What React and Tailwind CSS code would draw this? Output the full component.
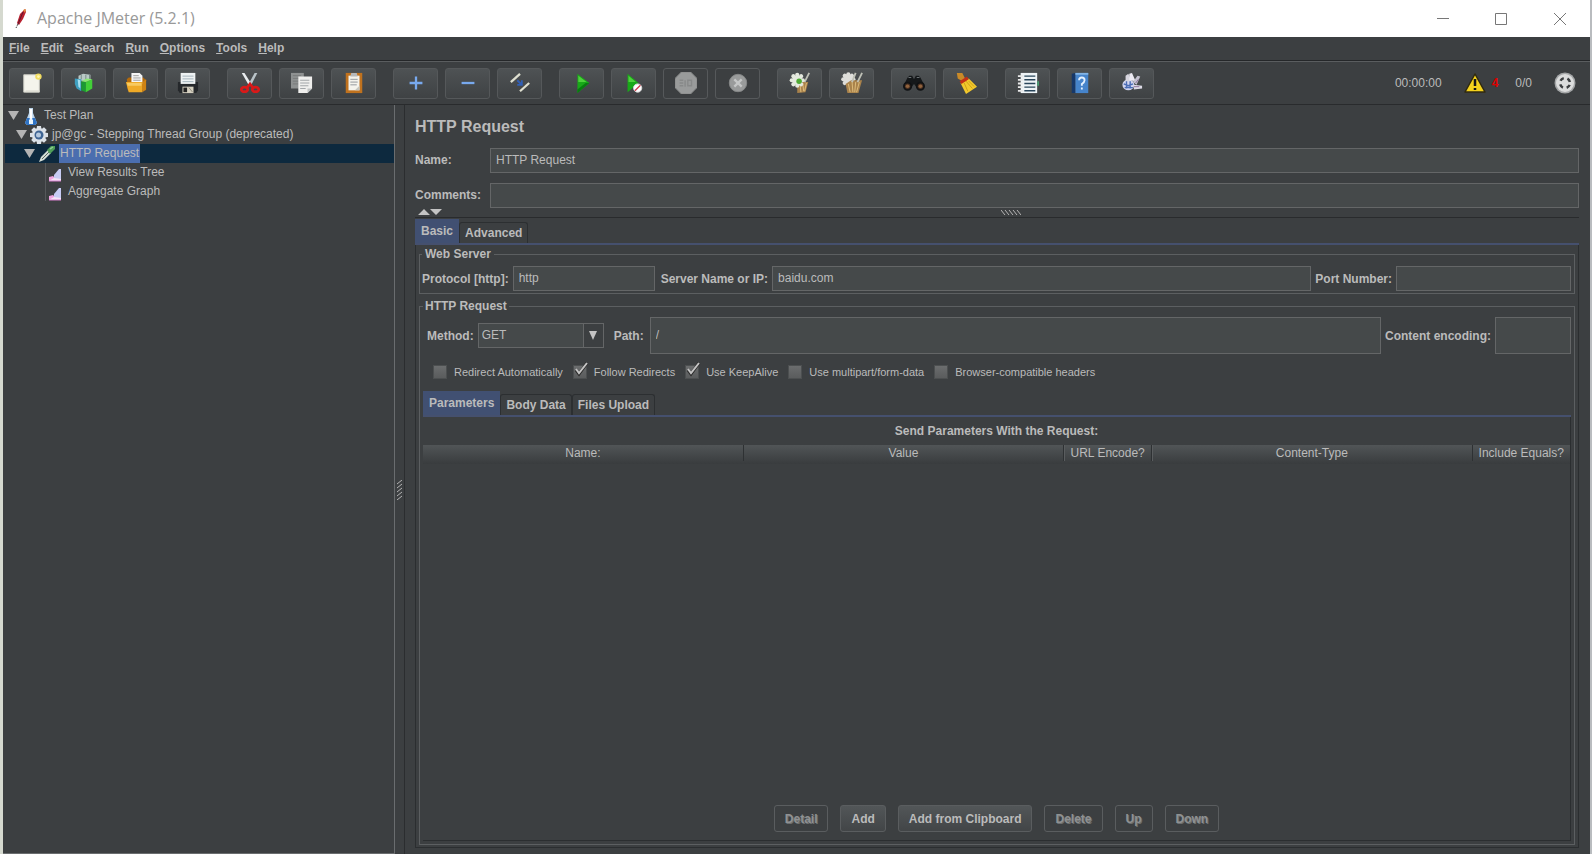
import { useState } from "react";

const menus = ["File", "Edit", "Search", "Run", "Options", "Tools", "Help"];

const toolGroups = [
  ["New", "Templates", "Open", "Save"],
  ["Cut", "Copy", "Paste"],
  ["Expand All", "Collapse All", "Toggle"],
  ["Start", "Start no pauses", "Stop", "Shutdown"],
  ["Clear", "Clear All"],
  ["Search Tree", "Reset Search"],
  ["Function Helper", "Help Contents", "Undo"],
];

const disabledTools = ["Stop", "Shutdown"];

const treeNodes = [
  { label: "Test Plan", icon: "flask", pad: "pl-[3px]", open: true },
  { label: "jp@gc - Stepping Thread Group (deprecated)", icon: "gear", pad: "pl-[11px]", open: true },
  { label: "HTTP Request", icon: "dropper", pad: "pl-[19px]", open: true },
  { label: "View Results Tree", icon: "graph", pad: "pl-10" },
  { label: "Aggregate Graph", icon: "graph", pad: "pl-10" },
];

const initialOptions = [
  { id: "redirect", label: "Redirect Automatically", checked: false },
  { id: "follow", label: "Follow Redirects", checked: true },
  { id: "keepalive", label: "Use KeepAlive", checked: true },
  { id: "multipart", label: "Use multipart/form-data", checked: false },
  { id: "browser", label: "Browser-compatible headers", checked: false },
];

const actions = [
  { label: "Detail", disabled: true },
  { label: "Add" },
  { label: "Add from Clipboard" },
  { label: "Delete", disabled: true },
  { label: "Up", disabled: true },
  { label: "Down", disabled: true },
];

const gearPoints = [0, 45, 90, 135, 180, 225, 270, 315];

const toolIcons = {
  New: (
    <>
      <path d="M3 3h17v19H3z" fill="#f4f4ec" stroke="#cfcfc6" />
      <path d="M5 20h15v2H5z" fill="#deded4" />
      <circle cx="19" cy="5" r="3.500" fill="#f2dd62" />
      <circle cx="19" cy="5" r="1.500" fill="#fff7b0" />
    </>
  ),
  Templates: (
    <>
      <path d="M6 4l5-2 8 1v5l-6 2-7-1z" fill="#b9c9c6" />
      <path d="M9 3v5M14 3v5M18 3v5" stroke="#718782" strokeWidth="1" />
      <path d="M2 7l7 1v13l-5-3-2-5z" fill="#3e9fc0" />
      <path d="M5 8l3 1v9l-2-2z" fill="#a8dff0" />
      <path d="M9 10l5 1v11l-5-2z" fill="#1b9a32" />
      <path d="M14 11l7-3v10l-7 4z" fill="#42cf38" />
      <path d="M9 10l6-3 6 1-7 3z" fill="#8be873" />
    </>
  ),
  Open: (
    <>
      <path d="M2 8l2-2h16l3 3v11H3z" fill="#b36a0c" />
      <path d="M7 1h9l3 3v9H7z" fill="#f5f5f5" />
      <path d="M9 4h6M9 6.500h8M9 9h8" stroke="#9a9a9a" />
      <path d="M1 11h18v11H4z" fill="#efaa27" />
      <path d="M19 11l4-3v11l-4 3z" fill="#cf8313" />
      <path d="M2 12h16v3H3z" fill="#f8ca60" />
    </>
  ),
  Save: (
    <>
      <path d="M1 11h22v9l-2 3H3l-2-3z" fill="#25282b" />
      <path d="M4 1h16v12H4z" fill="#eef2f3" />
      <path d="M6 4.500h12M6 7.500h12M6 10.500h12" stroke="#9fb0b8" />
      <path d="M6 16h12v7H6z" fill="#d5d0c0" />
      <path d="M7 17h4v5H7z" fill="#222" />
      <path d="M13 17l4 5" stroke="#8c887b" />
    </>
  ),
  Cut: (
    <>
      <path d="M3 1l3 0 8 13-3 1z" fill="#e9edef" />
      <path d="M20 1l-3 0-7 13 3 1z" fill="#b9c3c8" />
      <ellipse cx="6" cy="19" rx="3.500" ry="2.500" fill="none" stroke="#d91919" strokeWidth="3" />
      <ellipse cx="18" cy="19" rx="3.500" ry="2.500" fill="none" stroke="#d91919" strokeWidth="3" />
      <path d="M8 18l4-5 4 5" fill="none" stroke="#d91919" strokeWidth="3" />
    </>
  ),
  Copy: (
    <>
      <path d="M0 1h14v17H0z" fill="#8e9191" />
      <path d="M2 4h9M2 7h9M2 10h9M2 13h9" stroke="#777a7a" />
      <path d="M8 5h15v13l-5 5H8z" fill="#efefed" />
      <path d="M10 9h10M10 12h10M10 15h9M10 18h6" stroke="#9ba0a3" />
      <path d="M18 23v-5h5z" fill="#bfc2c2" />
    </>
  ),
  Paste: (
    <>
      <path d="M3 1h18v22H3z" fill="#c0721e" />
      <path d="M6 4h12v16H6z" fill="#f4f3ec" />
      <path d="M9 1h6l1 4H8z" fill="#b5b8ba" />
      <path d="M8 8h8M8 11h8M8 14h7" stroke="#8d9498" />
      <path d="M13 20l5-5v5z" fill="#c6c7c0" />
    </>
  ),
  "Expand All": <path d="M12 5v14M5 12h14" stroke="#78a9ee" strokeWidth="2.500" />,
  "Collapse All": <path d="M5 12h14" stroke="#78a9ee" strokeWidth="2.500" />,
  Toggle: (
    <>
      <path d="M2 11L12 2" stroke="#dedfd0" strokeWidth="2.500" />
      <path d="M12 21l10-9" stroke="#dedfd0" strokeWidth="2.500" />
      <path d="M9 9l5 5M14 9v5H9" fill="none" stroke="#315fb6" strokeWidth="2" />
    </>
  ),
  Start: (
    <>
      <path d="M7 2l13 10-13 11z" fill="#18a818" />
      <path d="M8 4l9 7H8z" fill="#4ed13c" />
      <path d="M7 23l13-11-4 0-9 7z" fill="#087a10" />
    </>
  ),
  "Start no pauses": (
    <>
      <path d="M5 2l12 10-12 10z" fill="#18a818" />
      <path d="M6 4l8 7H6z" fill="#4ed13c" />
      <circle cx="16" cy="17.500" r="4.500" fill="#fff" stroke="#d9d9d9" />
      <path d="M13 20.500l6-6" stroke="#cf3a4a" strokeWidth="1.500" />
    </>
  ),
  Stop: (
    <>
      <path d="M7 0h10l7 7v10l-7 7H7l-7-7V7z" fill="#999b9b" stroke="#858787" />
      <path d="M5 9h4M5 12h4M5 15h4M11 9v7M14 9h4v6h-4z" fill="none" stroke="#878989" strokeWidth="1.500" />
    </>
  ),
  Shutdown: (
    <>
      <circle cx="12" cy="12" r="9.500" fill="#999b9b" stroke="#878989" />
      <path d="M8 8l8 8M16 8l-8 8" stroke="#c5c7c7" strokeWidth="2.500" />
    </>
  ),
  Clear: (
    <>
      <path d="M9 11h12l-3 11-9 1z" fill="#a9824b" />
      <path d="M12 13l1 9M15 12l1 9M19 12l-2 9" stroke="#e0bf7e" />
      <path d="M17 11l5-10" stroke="#bec0b6" strokeWidth="2" />
      <circle cx="9" cy="9" r="5.500" fill="#e4e9de" />
      {gearPoints.map((a) => (
        <circle key={a} cx="9" cy="3" r="2.300" fill="#e4e9de" transform={`rotate(${a} 9 9)`} />
      ))}
      <circle cx="11" cy="10" r="3" fill="#4faa34" />
    </>
  ),
  "Clear All": (
    <>
      <circle cx="8" cy="8" r="5.500" fill="#dededa" />
      {gearPoints.map((a) => (
        <circle key={a} cx="8" cy="2.500" r="2.300" fill="#dededa" transform={`rotate(${a} 8 8)`} />
      ))}
      <path d="M5 13l6-4h12l-4 14H7z" fill="#a9824b" />
      <path d="M8 13l2 9M12 10l1 12M16 11l-1 11M20 11l-3 11" stroke="#e0bf7e" />
      <path d="M12 11l4-10M18 11l5-10" stroke="#bec0b6" strokeWidth="2" />
    </>
  ),
  "Search Tree": (
    <>
      <path d="M1 14l4-8 2-2h3l2 4 2-4h3l2 2 4 8-5 3h-3l-3-4-3 4H6z" fill="#15181a" />
      <path d="M6 6h3M15 6h3" stroke="#747a7d" />
      <circle cx="5" cy="15.500" r="4" fill="#4b3020" stroke="#101214" strokeWidth="2" />
      <circle cx="19" cy="15.500" r="4" fill="#4b3020" stroke="#101214" strokeWidth="2" />
      <circle cx="5" cy="15.500" r="2" fill="#90633e" />
      <circle cx="19" cy="15.500" r="2" fill="#90633e" />
    </>
  ),
  "Reset Search": (
    <>
      <path d="M2 1h6l3 6-3 3-5-3z" fill="#c98a28" />
      <path d="M6 12l9-5 9 9-12 8z" fill="#f3c92c" />
      <path d="M10 12l4 9M12 10l7 8M15 10l6 6" stroke="#c99c16" />
      <path d="M5 10l8-5 2 3-8 5z" fill="#c33016" />
    </>
  ),
  "Function Helper": (
    <>
      <path d="M4 1h18v22H4z" fill="#eef4f7" />
      <path d="M8 4.500h12M8 8.500h12M8 12.500h12M8 16.500h12M8 20.500h12" stroke="#29455a" strokeWidth="1.500" />
      <path d="M1 4.500h6M1 8.500h6M1 12.500h6M1 16.500h6M1 20.500h6" stroke="#e9e9e9" strokeWidth="2" />
      <path d="M22 10h2v5h-2z" fill="#4a9b72" />
    </>
  ),
  "Help Contents": (
    <>
      <path d="M3 2l4-1v22H3z" fill="#173869" />
      <path d="M7 1h14v22H7z" fill="#4684cb" />
      <path d="M7 1h14v2H7z" fill="#82b4e6" />
      <path d="M11 9q0-3 3-3t3 3q0 2-3 4v2M14 17v2" fill="none" stroke="#e4f1ff" strokeWidth="2" />
    </>
  ),
  Undo: (
    <>
      <ellipse cx="8" cy="14" rx="6.500" ry="6" fill="#cfd3ee" />
      <path d="M5 11L5 4l3-2 3 7z" fill="#d7d6df" />
      <path d="M9 9V2l3-1 4 9z" fill="#eceaf2" />
      <path d="M13 11l5-7 3 1-4 9z" fill="#c3c1cf" />
      <path d="M14 14l9 1v3l-9 1z" fill="#dddbe6" />
      <path d="M3 13l5 2 5-2M4 17l9 0M6 10v8M10 10v8" stroke="#4a6cb5" fill="none" strokeWidth="1.500" />
      <path d="M16 12l3-4M14 16h6" stroke="#8b6f9a" />
    </>
  ),
};

function ToolButton({ name }) {
  const disabled = disabledTools.includes(name);
  return (
    <button
      type="button"
      aria-label={name}
      disabled={disabled}
      className={`flex h-[31px] w-[45px] shrink-0 items-center justify-center rounded-[3px] border ${
        disabled ? "border-[#56595b]" : "border-[#55585a] bg-linear-to-b from-[#4e5254] to-[#3f4244]"
      }`}
    >
      <svg viewBox="0 0 24 24" className="size-[22px]" aria-hidden="true">
        {toolIcons[name]}
      </svg>
    </button>
  );
}

function TreeIcon({ type }) {
  if (type === "flask") {
    return (
      <svg viewBox="0 0 18 18" className="size-[18px] shrink-0" aria-hidden="true">
        <path d="M7 1h4v5l4 10-2 2H5l-2-2 4-10z" fill="#b9d3ea" />
        <path d="M5 11h8l2 5-2 2H5l-2-2z" fill="#2f73c4" />
        <path d="M9 2v10" stroke="#fff" strokeWidth="2.500" />
        <path d="M7 13l2-2 2 2v4H7z" fill="#e9f4fb" />
      </svg>
    );
  }
  if (type === "gear") {
    return (
      <svg viewBox="0 0 18 18" className="size-[18px] shrink-0" aria-hidden="true">
        {gearPoints.map((a) => (
          <path key={a} d="M7 0h4l.5 4h-5z" fill="#dce2e8" transform={`rotate(${a} 9 9)`} />
        ))}
        <circle cx="9" cy="9" r="7" fill="#dce2e8" />
        <circle cx="9" cy="9" r="4.500" fill="#3f6594" />
        <circle cx="8.500" cy="9" r="2.500" fill="#b5c9df" />
      </svg>
    );
  }
  if (type === "dropper") {
    return (
      <svg viewBox="0 0 18 18" className="size-[18px] shrink-0" aria-hidden="true">
        <path d="M1 17l2-5 7-7 3 3-7 7z" fill="#d5ddd5" />
        <path d="M4 14l7-7" stroke="#5c6965" />
        <path d="M9 5l4-4 4 0 0 3-5 5z" fill="#4f9e58" />
        <path d="M12 4l3-2" stroke="#93cf96" strokeWidth="1.500" />
      </svg>
    );
  }
  return (
    <svg viewBox="0 0 14 14" className="size-[14px] shrink-0" aria-hidden="true">
      <path d="M1 13V9l4-1 3 3v2z" fill="#f0a6e0" />
      <path d="M6 13V7l5-6h2v12z" fill="#c7ccf4" />
      <path d="M1 13l5-3 7 1v2z" fill="#f5e3f7" />
      <path d="M1 13h12" stroke="#d77fcd" />
    </svg>
  );
}

function Tab({ label, active, onClick }) {
  return (
    <button
      type="button"
      role="tab"
      aria-selected={active}
      onClick={onClick}
      className={
        active
          ? "h-6 bg-[#415072] px-1.5 font-bold"
          : "h-[21px] rounded-t-[3px] border border-b-0 border-[#2c2f31] px-[5px] font-bold"
      }
    >
      {label}
    </button>
  );
}

function Field({ id, className = "", ...rest }) {
  return (
    <input
      id={id}
      type="text"
      className={`min-w-0 border border-[#646667] bg-[#45494a] px-[5px] pb-px text-[#bbbbbb] outline-none ${className}`}
      {...rest}
    />
  );
}

function TitleBar() {
  return (
    <header className="flex h-[37px] shrink-0 items-center bg-white">
      <svg viewBox="0 0 16 24" className="ml-2 h-6 w-4" aria-hidden="true">
        <path d="M6 16L9 7l5-5 1 3-3 7-4 6z" fill="#b8202f" />
        <path d="M12 3l3-1-1 4z" fill="#e08a3a" />
        <path d="M12 5L7 17" stroke="#5d1730" />
        <path d="M7 17l-2 4" stroke="#444" strokeDasharray="2 1" />
      </svg>
      <h1 className="ml-2.5 pb-0.5 font-['Open_Sans',sans-serif] text-base text-[#999999]">Apache JMeter (5.2.1)</h1>
      <div className="ml-auto flex">
        <button type="button" aria-label="Minimize" className="flex h-9 w-[58px] items-center justify-center">
          <svg viewBox="0 0 12 12" className="size-3" stroke="#777" fill="none" aria-hidden="true">
            <path d="M0 5.500h12" />
          </svg>
        </button>
        <button type="button" aria-label="Maximize" className="flex h-9 w-[58px] items-center justify-center">
          <svg viewBox="0 0 12 12" className="size-3" stroke="#777" fill="none" aria-hidden="true">
            <path d="M.5.5h11v11H.5z" />
          </svg>
        </button>
        <button type="button" aria-label="Close" className="flex h-9 w-[60px] items-center justify-center">
          <svg viewBox="0 0 12 12" className="size-3" stroke="#777" fill="none" aria-hidden="true">
            <path d="M0 0l12 12M12 0L0 12" />
          </svg>
        </button>
      </div>
    </header>
  );
}

function MenuBar() {
  return (
    <nav className="flex h-6 shrink-0 items-center gap-[11px] border-b border-[#252729] px-1.5 pb-0.5 font-bold">
      {menus.map((m) => (
        <button key={m} type="button">
          <span className="underline">{m[0]}</span>
          {m.slice(1)}
        </button>
      ))}
    </nav>
  );
}

function ToolBar() {
  return (
    <div className="flex h-11 shrink-0 items-center border-t border-b border-t-[#5a5d5f] border-b-[#292b2d] pr-[14px] pl-1.5">
      <div className="flex gap-[17px]">
        {toolGroups.map((group) => (
          <div key={group[0]} className="flex gap-[7px]">
            {group.map((name) => (
              <ToolButton key={name} name={name} />
            ))}
          </div>
        ))}
      </div>
      <div className="ml-auto flex items-center">
        <span>00:00:00</span>
        <svg viewBox="0 0 22 20" className="ml-[22px] h-5 w-[22px]" aria-hidden="true">
          <path d="M11 1l10 18H1z" fill="#f4d21d" stroke="#302a10" strokeWidth="1.500" strokeLinejoin="round" />
          <path d="M11 6v7M11 15v2" stroke="#161616" strokeWidth="2.500" />
        </svg>
        <span className="ml-1.5 font-bold text-[#e00000]">4</span>
        <span className="ml-[17px]">0/0</span>
        <svg viewBox="0 0 22 22" className="ml-[22px] size-[22px]" aria-hidden="true">
          <circle cx="11" cy="11" r="10.500" fill="#a5a7a8" />
          <circle cx="11" cy="11" r="9" fill="#dcdddd" />
          <circle
            cx="11"
            cy="11"
            r="5"
            fill="none"
            stroke="#3c3f41"
            strokeWidth="2.500"
            strokeDasharray="4 3.854"
            strokeDashoffset="-1.930"
          />
        </svg>
      </div>
    </div>
  );
}

function TestTree({ selected, onSelect }) {
  return (
    <aside className="flex w-[392px] shrink-0 flex-col border-r border-b border-[#6a6d6f] pt-px pl-0.5" role="tree">
      {treeNodes.map((node) => {
        const isSelected = node.label === selected;
        return (
          <button
            key={node.label}
            type="button"
            role="treeitem"
            aria-selected={isSelected}
            onClick={() => onSelect(node.label)}
            className={`flex h-[19px] items-center ${isSelected ? "bg-[#0d293e]" : ""}`}
          >
            <span className={`flex items-center ${node.pad}`}>
              {node.open ? (
                <svg viewBox="0 0 11 9" className="mr-[3px] h-[9px] w-[11px]" aria-hidden="true">
                  <path d="M0 0h11L5.500 9z" fill="#b4b4b4" />
                </svg>
              ) : (
                <span className="mr-0.5 h-[19px] w-px bg-[#55585a]" />
              )}
              <span className={node.open ? "" : "pt-[5px]"}>
                <TreeIcon type={node.icon} />
              </span>
            </span>
            <span
              className={`h-[19px] px-px leading-[18px] ${isSelected ? "bg-[#4b6eaf]" : ""} ${
                node.open ? "ml-[3px]" : "ml-[5px]"
              }`}
            >
              {node.label}
            </span>
          </button>
        );
      })}
    </aside>
  );
}

function WebServer() {
  return (
    <fieldset className="mx-[3px] mt-px border border-[#5c5f61] px-0.5 pb-0.5">
      <legend className="px-[3px] leading-4 font-bold">Web Server</legend>
      <div className="flex items-center pt-1 pr-px">
        <label htmlFor="protocol" className="font-bold">Protocol [http]:</label>
        <Field id="protocol" defaultValue="http" className="ml-1 h-[25px] w-[142px]" />
        <label htmlFor="server" className="ml-1.5 font-bold">Server Name or IP:</label>
        <Field id="server" defaultValue="baidu.com" className="ml-1 h-[25px] flex-1" />
        <label htmlFor="port" className="ml-1 font-bold">Port Number:</label>
        <Field id="port" className="ml-1 h-[25px] w-[175px]" />
      </div>
    </fieldset>
  );
}

function RequestOptions() {
  const [options, setOptions] = useState(initialOptions);

  function toggle(id) {
    setOptions(options.map((o) => (o.id === id ? { ...o, checked: !o.checked } : o)));
  }

  return (
    <div className="flex gap-2.5 pt-[9px] pl-2.5">
      {options.map((o) => (
        <label key={o.id} className="flex h-[18px] items-center gap-[7px] text-[11px]">
          <span className="relative flex">
            <input
              type="checkbox"
              checked={o.checked}
              onChange={() => toggle(o.id)}
              className="size-[14px] appearance-none border border-[#4c4f50] bg-linear-to-b from-[#6b6d6e] to-[#5a5c5d]"
            />
            {o.checked && (
              <svg viewBox="0 0 16 16" className="pointer-events-none absolute -top-[3px] left-0 size-4" aria-hidden="true">
                <path d="M3 8l3 4 8-11" fill="none" stroke="#2b2b2b" strokeWidth="3" />
                <path d="M3 7l3 4 8-10" fill="none" stroke="#c4c4c4" strokeWidth="2" />
              </svg>
            )}
          </span>
          {o.label}
        </label>
      ))}
    </div>
  );
}

function ParametersTable() {
  const cell = "border-r border-[#2e3133] text-center font-normal shadow-[1px_0_0_#5a5d5f]";
  return (
    <table className="h-[19px] w-full table-fixed border-collapse bg-linear-to-b from-[#515557] to-[#393c3e]">
      <thead>
        <tr>
          <th className={cell}>Name:</th>
          <th className={cell}>Value</th>
          <th className={`w-[88px] ${cell}`}>URL Encode?</th>
          <th className={cell}>Content-Type</th>
          <th className="w-[98px] text-center font-normal">Include Equals?</th>
        </tr>
      </thead>
      <tbody />
    </table>
  );
}

function HttpRequest() {
  const [tab, setTab] = useState("Parameters");

  return (
    <fieldset className="mx-[3px] mt-1 mb-0.5 flex min-h-0 flex-1 flex-col border border-[#5c5f61] px-[3px] pb-[3px]">
      <legend className="px-0.5 leading-4 font-bold">HTTP Request</legend>
      <div className="flex h-full flex-col">
        <div className="flex items-center pt-[3px] pl-1">
          <label htmlFor="method" className="font-bold">Method:</label>
          <div className="relative ml-1">
            <select
              id="method"
              defaultValue="GET"
              className="h-[25px] w-[126px] appearance-none border border-[#646667] bg-[#45494a] px-[3px] pb-0.5 outline-none"
            >
              <option>GET</option>
              <option>POST</option>
              <option>PUT</option>
              <option>DELETE</option>
            </select>
            <span className="pointer-events-none absolute top-px right-px flex h-[23px] w-5 items-center justify-center border-l border-[#646667] bg-[#3c3f41]">
              <svg viewBox="0 0 8 9" className="h-[9px] w-2" aria-hidden="true">
                <path d="M0 0h8L4 9z" fill="#c4c4c4" />
              </svg>
            </span>
          </div>
          <label htmlFor="path" className="ml-2.5 font-bold">Path:</label>
          <Field id="path" defaultValue="/" className="ml-1.5 h-[37px] flex-1" />
          <label htmlFor="encoding" className="ml-1 font-bold">Content encoding:</label>
          <Field id="encoding" className="ml-1 h-[37px] w-[76px]" />
        </div>
        <RequestOptions />
        <div className="mt-3 flex min-h-0 flex-1 flex-col">
          <div className="flex h-6 items-end border-b-2 border-[#45506e]" role="tablist">
            {["Parameters", "Body Data", "Files Upload"].map((t) => (
              <Tab key={t} label={t} active={t === tab} onClick={() => setTab(t)} />
            ))}
          </div>
          <div className="flex min-h-0 flex-1 flex-col border-r border-b border-[#2b2e30]">
            <p className="flex h-7 items-center justify-center font-bold">Send Parameters With the Request:</p>
            <ParametersTable />
            <div className="mt-auto mb-2 flex justify-center gap-3">
              {actions.map((a) => (
                <button
                  key={a.label}
                  type="button"
                  disabled={a.disabled}
                  className={`h-[27px] rounded-[3px] border border-[#5a5d5f] px-2.5 font-bold ${
                    a.disabled
                      ? "text-[#8f9192] [text-shadow:1px_1px_0_#6d6f70]"
                      : "bg-linear-to-b from-[#525658] to-[#424547]"
                  }`}
                >
                  {a.label}
                </button>
              ))}
            </div>
          </div>
        </div>
      </div>
    </fieldset>
  );
}

function RequestPanel() {
  const [tab, setTab] = useState("Basic");

  return (
    <main className="flex min-w-0 flex-1 flex-col border-l border-[#2b2d2f] pt-2.5 pr-[11px] pb-1.5 pl-[10px]">
      <h2 className="text-base leading-6 font-bold">HTTP Request</h2>
      <div className="mt-[9px] flex items-center">
        <label htmlFor="name" className="w-[75px] pb-0.5 font-bold">Name:</label>
        <Field id="name" defaultValue="HTTP Request" className="h-[25px] flex-1" />
      </div>
      <div className="mt-2.5 flex items-center">
        <label htmlFor="comments" className="w-[75px] pb-0.5 font-bold">Comments:</label>
        <Field id="comments" className="h-[25px] flex-1" />
      </div>
      <div className="flex h-[10px] shrink-0 items-center border-b border-[#292b2d] pb-px">
        <svg viewBox="0 0 24 6" className="ml-[3px] h-1.5 w-6" aria-hidden="true">
          <path d="M0 6h12L6 0zM12 0h12l-6 6z" fill="#c4c4c4" />
        </svg>
        <svg viewBox="0 0 20 5" className="mx-auto h-[5px] w-5" stroke="#b5b5b5" aria-hidden="true">
          <path d="M0 0l4 5M4 0l4 5M8 0l4 5M12 0l4 5M16 0l4 5" />
        </svg>
      </div>
      <div className="mt-[3px] flex h-6 shrink-0 items-end border-b-2 border-[#45506e]" role="tablist">
        {["Basic", "Advanced"].map((t) => (
          <Tab key={t} label={t} active={t === tab} onClick={() => setTab(t)} />
        ))}
      </div>
      <div className="flex min-h-0 flex-1 flex-col border border-t-0 border-[#2b2e30]">
        <WebServer />
        <HttpRequest />
      </div>
    </main>
  );
}

function App() {
  const [selected, setSelected] = useState("HTTP Request");

  return (
    <div className="flex h-screen flex-col border-r-2 border-l-[3px] border-r-[#b9bcbf] border-l-[#d5d9cf] bg-[#3c3f41] font-['Liberation_Sans',Arial,sans-serif] text-xs text-[#bbbbbb]">
      <TitleBar />
      <MenuBar />
      <ToolBar />
      <div className="flex min-h-0 flex-1">
        <TestTree selected={selected} onSelect={setSelected} />
        <div className="flex w-[9px] shrink-0 items-center justify-center pt-5">
          <svg viewBox="0 0 5 20" className="h-5 w-[5px]" stroke="#b5b5b5" aria-hidden="true">
            <path d="M0 4l5-4M0 8l5-4M0 12l5-4M0 16l5-4M0 20l5-4" />
          </svg>
        </div>
        <RequestPanel />
      </div>
    </div>
  );
}

export default App;
